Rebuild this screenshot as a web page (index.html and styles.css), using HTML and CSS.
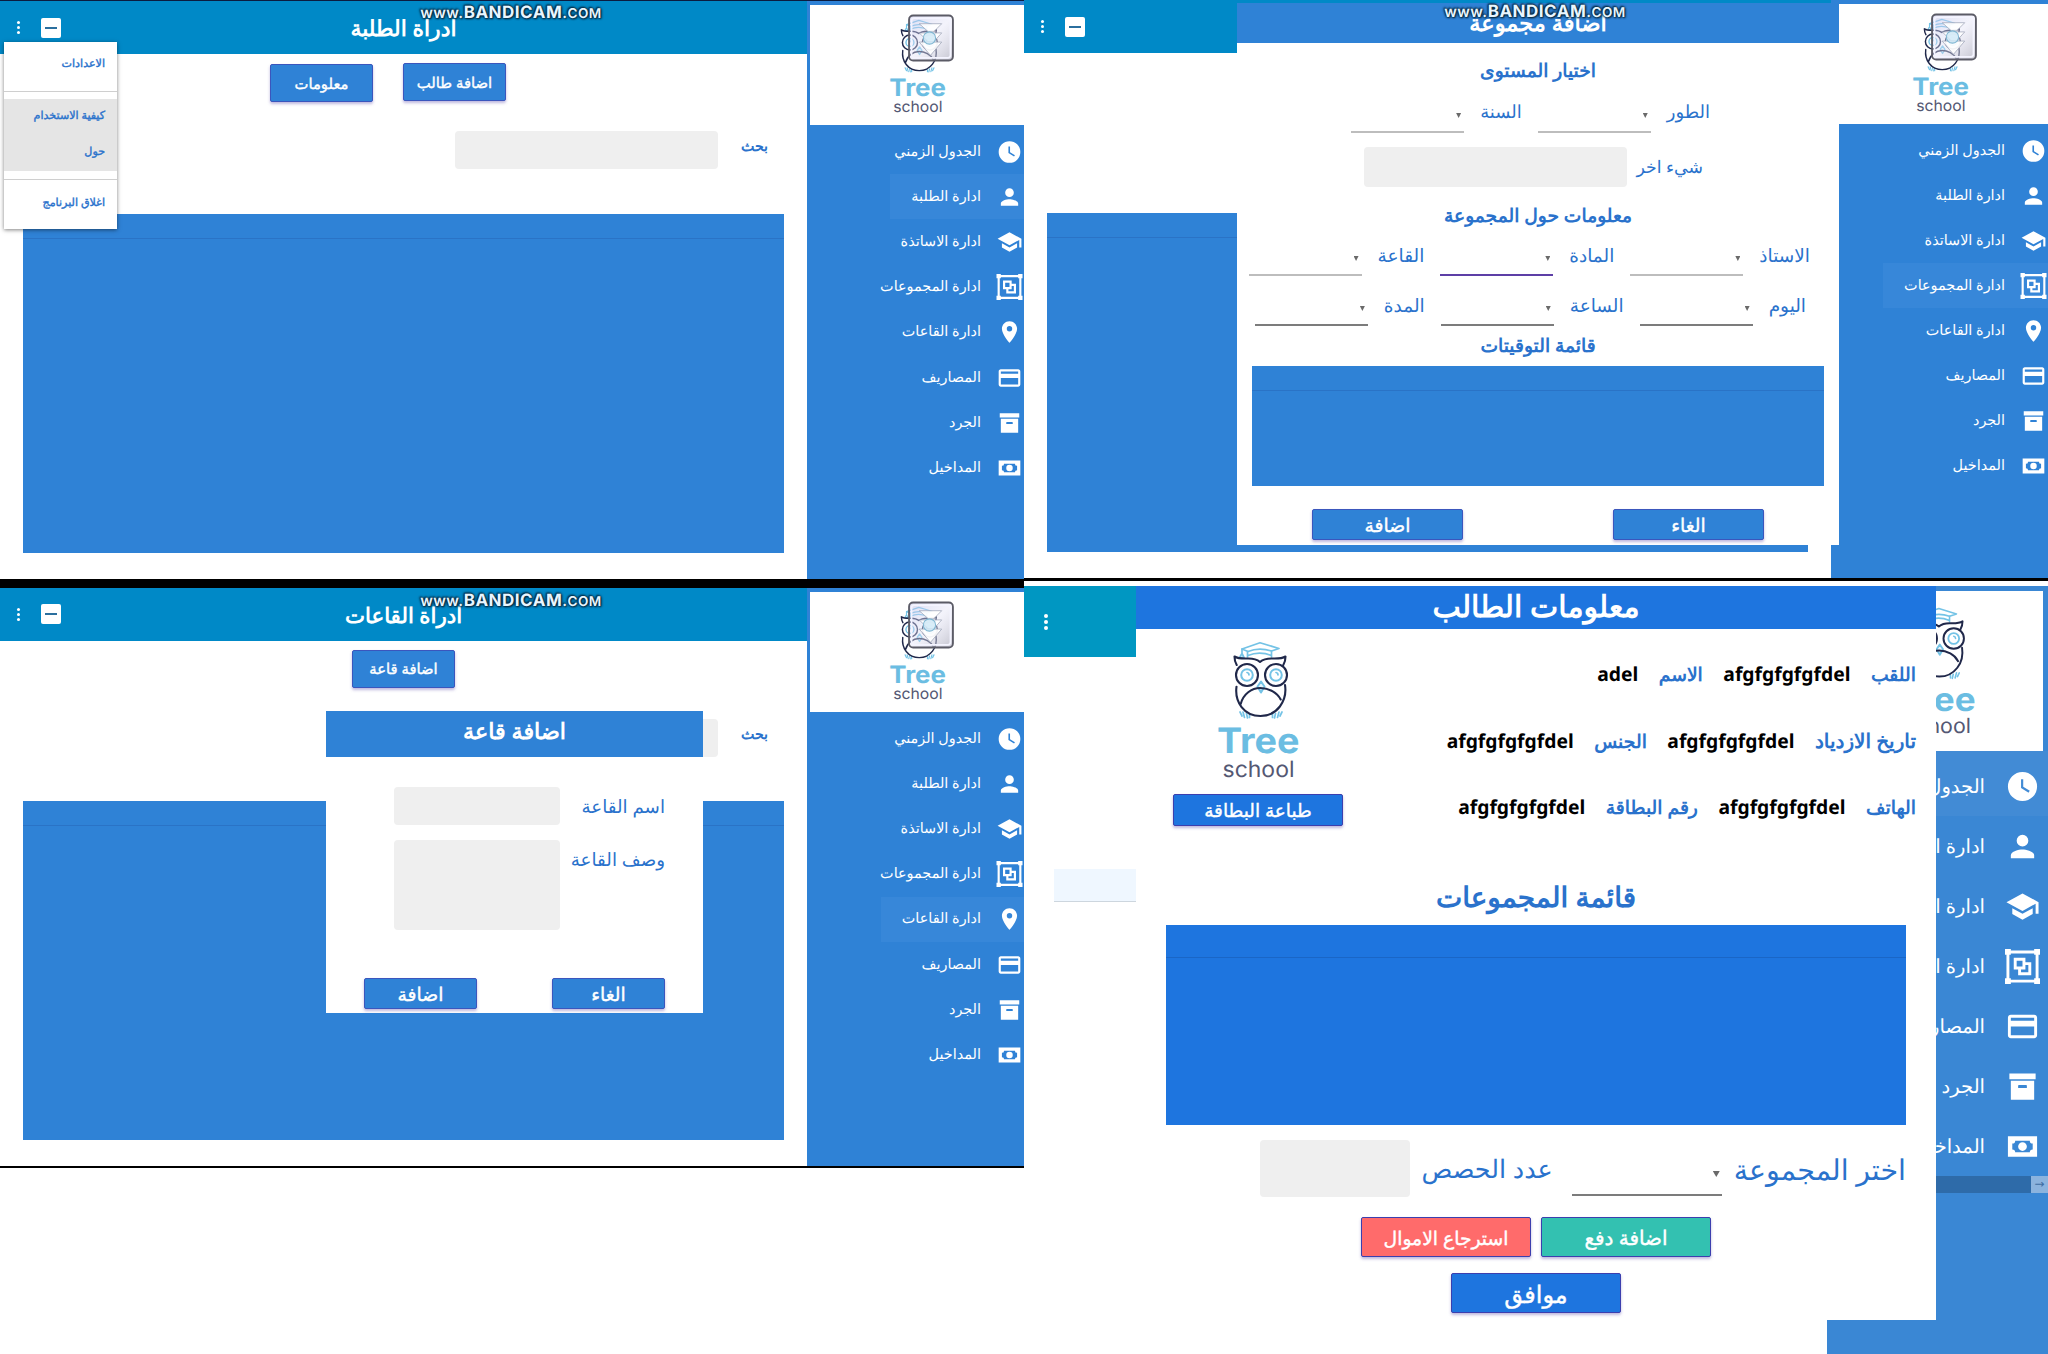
FILE: index.html
```html
<!DOCTYPE html>
<html lang="ar">
<head>
<meta charset="utf-8">
<title>Tree school</title>
<link rel="stylesheet" href="styles.css">
</head>
<body>
<svg class="defs" aria-hidden="true">
  <symbol id="i-clock" viewBox="0 0 24 24"><path fill-rule="evenodd" d="M12 2a10 10 0 1 0 0 20 10 10 0 0 0 0-20zm4.2 14.2L11 13V7h1.5v5.2l4.5 2.7-.8 1.3z"/></symbol>
  <symbol id="i-person" viewBox="0 0 24 24"><path d="M12 12a4 4 0 1 0 0-8 4 4 0 0 0 0 8zm0 2c-2.67 0-8 1.34-8 4v2h16v-2c0-2.66-5.33-4-8-4z"/></symbol>
  <symbol id="i-school" viewBox="0 0 24 24"><path d="M5 13.18v4L12 21l7-3.82v-4L12 17l-7-3.82zM12 3 1 9l11 6 9-4.91V17h2V9L12 3z"/></symbol>
  <symbol id="i-group" viewBox="0 0 24 24"><path fill-rule="evenodd" d="M0 0h4v1h16V0h4v4h-1v16h1v4h-4v-1H4v1H0v-4h1V4H0V0zm4 3v1H3v16h1v1h16v-1h1V4h-1V3H4zm2 3h8v3h4v9H9v-4H6V6zm2 2v4h4V8H8zm6 3v3h-3v2h5v-5h-2z"/></symbol>
  <symbol id="i-pin" viewBox="0 0 24 24"><path d="M12 2C8.13 2 5 5.13 5 9c0 5.25 7 13 7 13s7-7.75 7-13c0-3.87-3.13-7-7-7zm0 9.5a2.5 2.5 0 1 1 0-5 2.5 2.5 0 0 1 0 5z"/></symbol>
  <symbol id="i-card" viewBox="0 0 24 24"><path d="M20 4H4c-1.11 0-1.99.89-1.99 2L2 18c0 1.11.89 2 2 2h16c1.11 0 2-.89 2-2V6c0-1.11-.89-2-2-2zm0 14H4v-6h16v6zm0-10H4V6h16v2z"/></symbol>
  <symbol id="i-box" viewBox="0 0 24 24"><path fill-rule="evenodd" d="M3 3h18v4H3V3zm1 5h16v13H4V8zm5.500 3a.5.5 0 0 0-.5.500V13h6v-1.500a.5.5 0 0 0-.5-.5h-5z"/></symbol>
  <symbol id="i-cash" viewBox="0 0 24 24"><path fill-rule="evenodd" d="M2 5h20v14H2V5zm10 4a3 3 0 1 0 0 6 3 3 0 0 0 0-6zM7 8a2 2 0 0 1-2 2v4a2 2 0 0 1 2 2h10a2 2 0 0 1 2-2v-4a2 2 0 0 1-2-2H7z"/></symbol>
  <symbol id="logo" viewBox="0 0 86 140">
    <g fill="none" stroke-linecap="round" stroke-linejoin="round">
      <g stroke="#74c3e6" stroke-width="1.7">
        <path d="M27 9 45 2.700 64 8.500l-7.500 2.500M27 9l6 2.500c7-3 16-3 23.500-.5"/>
        <path d="M32.500 11.500V17M56.500 11v6M33 15.500c7-3 16-3 23.500 0M27 9v4.500l-2.500 4h4.500l-2-4"/>
        <circle cx="32" cy="35" r="5.800" stroke-width="2"/><circle cx="61" cy="35" r="5.800" stroke-width="2"/>
        <path d="M32 32.500a2.500 2.500 0 0 1 2 2.500M61 32.500a2.500 2.500 0 0 1 2 2.500"/>
        <path d="M46 41.500l3.500 5-3.500 6-3.500-6z" stroke-width="2" fill="#e6f5fc"/>
        <path d="M25 72l2 4M28 72l1.500 5.500M31.500 73.500l1 4.500M34.500 74.500v3M57.500 74.500v3M60.500 73.500l-1 4.500M64 72l-1.500 5.500M67 72l-2 4"/>
      </g>
      <g stroke="#20284a" stroke-width="2.100">
        <path d="M21.700 25c-1.500-2.500-2.200-5-2.200-8.500 4 2.500 9 2 14 2s8 .5 11.500 3.500c3.500-3 6.500-3.500 11.500-3.500s10 .5 14-2c0 3.500-.7 6-2.200 8.500"/>
        <circle cx="32" cy="35" r="11"/><circle cx="61" cy="35" r="11"/>
        <path d="M21.500 46.700C19.500 62 29 76 45.500 76S72.500 61 70 45M25.700 64c2.500-10 11-16 19.500-16s17 4.500 20.500 11.500"/>
      </g>
    </g>
    <text x="2" y="113" textLength="82.500" lengthAdjust="spacingAndGlyphs" font-family="Inter, sans-serif" font-weight="700" font-size="35" fill="#6bbde2">Tree</text>
    <text x="7.500" y="137" textLength="72" lengthAdjust="spacingAndGlyphs" font-family="Inter, sans-serif" font-size="22.500" fill="#545873">school</text>
  </symbol>
  <linearGradient id="plate-fill" x1="0" y1="0" x2="1" y2="1"><stop offset="0" stop-color="#b9bce8" stop-opacity=".5"/><stop offset=".5" stop-color="#e2e2f6" stop-opacity=".4"/><stop offset="1" stop-color="#a9a9b8" stop-opacity=".7"/></linearGradient>
  <symbol id="plate" viewBox="0 0 48 48">
    <rect x="2" y="2" width="43" height="44" rx="4" fill="url(#plate-fill)" stroke="#5b5b66" stroke-width="1.800"/>
    <rect x="4.500" y="4.500" width="38" height="39" rx="2.500" fill="none" stroke="#f4f4ff" stroke-width="1.600"/>
    <g fill="#fff" fill-opacity=".9" stroke="#9aa0b4" stroke-width=".7"><path d="M12 10h22l-8 8h-5z"/><path d="M12 19h22l-8 9h-5z"/><path d="M12 28h22l-11 13z"/></g>
    <circle cx="22" cy="24" r="6" fill="#cfe9f6" fill-opacity=".8" stroke="#7fb6d2"/>
  </symbol>
</svg>

<main class="board">
  <div class="column">
    <section class="win win-students">
      <div class="page">
        <header class="bar"><div class="tools"><i class="dots"></i><i class="mini"></i></div><h1>ادراة الطلبة</h1></header>
        <div class="actions pair"><button class="btn"><span>معلومات</span></button><button class="btn up"><span>اضافة طالب</span></button></div>
        <div class="search"><label>بحث</label><div class="input"></div></div>
        <div class="table"></div>
      </div>
      <aside class="side">
        <div class="brand"><svg class="logo"><use href="#logo"/></svg><svg class="plate"><use href="#plate"/></svg></div>
        <nav>
          <a><svg><use href="#i-clock"/></svg><span>الجدول الزمني</span></a>
          <a class="on"><svg><use href="#i-person"/></svg><span>ادارة الطلبة</span></a>
          <a><svg><use href="#i-school"/></svg><span>ادارة الاساتذة</span></a>
          <a><svg><use href="#i-group"/></svg><span>ادارة المجموعات</span></a>
          <a><svg><use href="#i-pin"/></svg><span>ادارة القاعات</span></a>
          <a><svg><use href="#i-card"/></svg><span>المصاريف</span></a>
          <a><svg><use href="#i-box"/></svg><span>الجرد</span></a>
          <a><svg><use href="#i-cash"/></svg><span>المداخيل</span></a>
        </nav>
      </aside>
      <div class="menu">
        <div class="group first"><span>الاعدادات</span></div>
        <div class="group hover"><span>كيفية الاستخدام</span><span>حول</span></div>
        <div class="group last"><span>اغلاق البرنامج</span></div>
      </div>
      <div class="mark">www.<b>BANDICAM</b>.<small>COM</small></div>
    </section>

    <section class="win win-rooms">
      <div class="page">
        <header class="bar"><div class="tools"><i class="dots"></i><i class="mini"></i></div><h1>ادراة القاعات</h1></header>
        <div class="actions"><button class="btn"><span>اضافة قاعة</span></button></div>
        <div class="search"><label>بحث</label><div class="input"></div></div>
        <div class="table"></div>
      </div>
      <aside class="side">
        <div class="brand"><svg class="logo"><use href="#logo"/></svg><svg class="plate"><use href="#plate"/></svg></div>
        <nav>
          <a><svg><use href="#i-clock"/></svg><span>الجدول الزمني</span></a>
          <a><svg><use href="#i-person"/></svg><span>ادارة الطلبة</span></a>
          <a><svg><use href="#i-school"/></svg><span>ادارة الاساتذة</span></a>
          <a><svg><use href="#i-group"/></svg><span>ادارة المجموعات</span></a>
          <a class="on"><svg><use href="#i-pin"/></svg><span>ادارة القاعات</span></a>
          <a><svg><use href="#i-card"/></svg><span>المصاريف</span></a>
          <a><svg><use href="#i-box"/></svg><span>الجرد</span></a>
          <a><svg><use href="#i-cash"/></svg><span>المداخيل</span></a>
        </nav>
      </aside>
      <div class="dialog room-dialog">
        <h2>اضافة قاعة</h2>
        <div class="line"><label>اسم القاعة</label><div class="input"></div></div>
        <div class="line"><label>وصف القاعة</label><div class="input tall"></div></div>
        <div class="choices"><button class="btn"><span>الغاء</span></button><button class="btn"><span>اضافة</span></button></div>
      </div>
      <div class="mark">www.<b>BANDICAM</b>.<small>COM</small></div>
    </section>
  </div>

  <div class="column">
    <section class="win win-groups">
      <div class="page">
        <header class="bar"><div class="tools"><i class="dots"></i><i class="mini"></i></div></header>
        <div class="table"></div>
      </div>
      <aside class="side">
        <div class="brand"><svg class="logo"><use href="#logo"/></svg><svg class="plate"><use href="#plate"/></svg></div>
        <nav>
          <a><svg><use href="#i-clock"/></svg><span>الجدول الزمني</span></a>
          <a><svg><use href="#i-person"/></svg><span>ادارة الطلبة</span></a>
          <a><svg><use href="#i-school"/></svg><span>ادارة الاساتذة</span></a>
          <a class="on"><svg><use href="#i-group"/></svg><span>ادارة المجموعات</span></a>
          <a><svg><use href="#i-pin"/></svg><span>ادارة القاعات</span></a>
          <a><svg><use href="#i-card"/></svg><span>المصاريف</span></a>
          <a><svg><use href="#i-box"/></svg><span>الجرد</span></a>
          <a><svg><use href="#i-cash"/></svg><span>المداخيل</span></a>
        </nav>
      </aside>
      <div class="dialog group-dialog">
        <h2>اضافة مجموعة</h2>
        <h3 class="h-level">اختيار المستوى</h3>
        <div class="fields level"><label>الطور</label><div class="select pale"></div><label>السنة</label><div class="select pale"></div></div>
        <div class="fields other"><label>شيء اخر</label><div class="input"></div></div>
        <h3 class="h-info">معلومات حول المجموعة</h3>
        <div class="fields who"><label>الاستاذ</label><div class="select pale"></div><label>المادة</label><div class="select focus"></div><label>القاعة</label><div class="select pale"></div></div>
        <div class="fields when"><label>اليوم</label><div class="select"></div><label>الساعة</label><div class="select"></div><label>المدة</label><div class="select"></div></div>
        <h3 class="h-times">قائمة التوقيتات</h3>
        <div class="table"></div>
        <div class="choices"><button class="btn"><span>الغاء</span></button><button class="btn"><span>اضافة</span></button></div>
      </div>
      <div class="mark">www.<b>BANDICAM</b>.<small>COM</small></div>
    </section>

    <section class="win win-info">
      <div class="page">
        <header class="bar"><i class="dots"></i></header>
        <div class="chip"></div>
      </div>
      <aside class="side">
        <div class="brand"><svg class="logo"><use href="#logo"/></svg></div>
        <nav>
          <a class="on"><svg><use href="#i-clock"/></svg><span>الجدول الزمني</span></a>
          <a><svg><use href="#i-person"/></svg><span>ادارة الطلبة</span></a>
          <a><svg><use href="#i-school"/></svg><span>ادارة الاساتذة</span></a>
          <a><svg><use href="#i-group"/></svg><span>ادارة المجموعات</span></a>
          <a><svg><use href="#i-card"/></svg><span>المصاريف</span></a>
          <a><svg><use href="#i-box"/></svg><span>الجرد</span></a>
          <a><svg><use href="#i-cash"/></svg><span>المداخيل</span></a>
        </nav>
        <div class="scroll"><i>→</i></div>
      </aside>
      <div class="dialog info-dialog">
        <h2>معلومات الطالب</h2>
        <div class="info">
          <div class="card"><svg class="logo"><use href="#logo"/></svg><button class="btn"><span>طباعة البطاقة</span></button></div>
          <div class="facts">
            <div class="fact"><label>اللقب</label><b>afgfgfgfgfdel</b><label>الاسم</label><b>adel</b></div>
            <div class="fact"><label class="birth">تاريخ الازدياد</label><b>afgfgfgfgfdel</b><label>الجنس</label><b>afgfgfgfgfdel</b></div>
            <div class="fact"><label>الهاتف</label><b>afgfgfgfgfdel</b><label>رقم البطاقة</label><b>afgfgfgfgfdel</b></div>
          </div>
        </div>
        <h3>قائمة المجموعات</h3>
        <div class="table"></div>
        <div class="pay"><label class="big">اختر المجموعة</label><div class="select"></div><label class="count">عدد الحصص</label><div class="input"></div></div>
        <div class="choices"><button class="btn green"><span>اضافة دفع</span></button><button class="btn red"><span>استرجاع الاموال</span></button></div>
        <div class="choices ok"><button class="btn"><span>موافق</span></button></div>
      </div>
    </section>
  </div>
</main>
</body>
</html>
```
FILE: styles.css
```css
* { box-sizing: border-box; }

body {
  margin: 0;
  background: #fff;
  font-family: "Open Sans", "Noto Sans", sans-serif;
  text-rendering: geometricPrecision;
  color: #2a72cc;
}

h1, h2, h3 { margin: 0; font-weight: 700; text-align: center; direction: rtl; white-space: nowrap; }
label, span { white-space: nowrap; direction: rtl; }
.defs { position: absolute; width: 0; height: 0; }

.board { display: grid; grid-template-columns: 1024px 1024px; height: 1354px; overflow: hidden; }
.column { display: flex; flex-direction: column; }

/* windows */
.win { position: relative; display: flex; overflow: hidden; background: #fff; }
.win-students { height: 588px; border-top: 1px solid #0b1c40; border-bottom: 9px solid #000; }
.win-rooms { height: 580px; border-bottom: 2px solid #000; }
.win-groups { height: 581px; border-bottom: 3px solid #000; }
.win-info { height: 768px; margin-top: 5px; }

.page { width: 807px; flex: none; display: flex; flex-direction: column; }
.bar { height: 53px; display: grid; grid-template-columns: 120px 1fr 120px; align-items: center; background: #0089c7; }
.tools { display: flex; align-items: center; gap: 21px; padding-left: 17px; }
.bar h1 { font-size: 21.900px; line-height: 32px; color: #fff; padding-top: 3px; }

.dots { width: 3px; height: 3px; border-radius: 50%; background: #fff; box-shadow: 0 -5px #fff, 0 5px #fff; }
.mini { width: 20px; height: 20px; border-radius: 2px; background: #fff; display: grid; place-items: center; }
.mini::after { content: ""; width: 12px; height: 2px; background: #2b6f9e; }

.actions { display: flex; justify-content: center; padding-top: 10px; }
.actions.pair { justify-content: flex-start; gap: 30px; padding-left: 270px; }
.btn {
  width: 103px; height: 38px; padding: 0;
  border: 1px solid #3b56bd; border-radius: 2px;
  background: #2f82d6; color: #fff;
  box-shadow: 0 2px 3px rgba(70, 50, 160, .35);
  font: 400 14.800px/20px "Open Sans", "Noto Sans", sans-serif;
  text-rendering: geometricPrecision;
  -webkit-text-stroke: .4px currentColor;
  direction: rtl; white-space: nowrap;
}
.pair .btn { padding-top: 1px; }
.pair .up { position: relative; top: -1px; }

.search { display: flex; direction: rtl; align-items: center; gap: 23px; padding-right: 39px; margin-top: 29px; }
.search label { font-weight: 700; font-size: 14.200px; line-height: 20px; padding-bottom: 6px; }
.input { width: 263px; height: 38px; border-radius: 4px; background: #efefef; }
.table { height: 339px; margin: 45px 23px 0; background: #2f82d6; padding-top: 24px; }
.table::before { content: ""; display: block; height: 1px; background: #2a73c6; }

/* sidebar */
.side { flex: 1; min-width: 0; background: #2f82d6; display: flex; flex-direction: column; }
.brand { position: relative; height: 120px; margin: 4px 0 0 3px; background: #fff; padding: 13px 0 0 78px; }
.logo { display: block; width: 59px; height: 97px; }
.plate { position: absolute; left: 97px; top: 8px; width: 49px; height: 50px; }
nav { display: flex; flex-direction: column; direction: rtl; align-items: flex-start; padding-top: 4px; }
nav a { display: flex; align-items: center; gap: 15px; height: 45.200px; padding: 0 1px 0 21px; color: #fff; font-size: 14.400px; line-height: 20px; }
nav a.on { background: #3787d9; }
nav svg { width: 27px; height: 26px; fill: #fff; flex: none; }

/* drop-down menu */
.menu {
  position: absolute; left: 4px; top: 41px; width: 113px; height: 187px;
  background: #fff; box-shadow: 0 1px 4px rgba(0, 0, 0, .5);
  font-size: 11.100px; -webkit-text-stroke: .4px currentColor; line-height: 36px; direction: rtl;
}
.group { display: flex; flex-direction: column; padding-right: 12px; }
.group.first { height: 50px; padding-top: 4px; border-bottom: 1px solid #cfcfcf; }
.group.hover { height: 72px; margin-top: 7px; background: #e5e5e5; }
.group.hover span { position: relative; top: -1px; }
.group.last { margin-top: 8px; padding-top: 5px; border-top: 1px solid #cfcfcf; }

.mark {
  position: absolute; left: 415px; top: 0; width: 192px; text-align: center;
  font: 600 15px/24px Inter, sans-serif; letter-spacing: .5px; color: #e8f6ff;
  text-shadow: 0 0 2px #06283f, 0 0 3px #06283f, 1px 1px 2px #06283f, -1px -1px 2px #06283f;
}
.mark b { font-size: 17px; font-weight: 700; }
.mark small { font-size: 13.500px; }

/* dialogs */
.dialog { position: absolute; background: #fff; display: flex; flex-direction: column; }
.dialog h2 { color: #fff; background: #2f82d6; }
.choices { display: flex; direction: rtl; }

.room-dialog { left: 326px; top: 123px; width: 377px; height: 302px; }
.room-dialog h2 { height: 46px; font-size: 22.300px; line-height: 39px; margin-bottom: 30px; }
.line { display: flex; direction: rtl; padding-right: 38px; margin-bottom: 15px; }
.line label { width: 105px; font-size: 18.300px; line-height: 39px; height: 38px; }
.line .input { width: 166px; }
.line .tall { height: 90px; }
.room-dialog .choices { gap: 75px; padding: 33px 38px 0 0; }
.room-dialog .btn { width: 113px; height: 31px; font-size: 18.800px; }

.group-dialog { left: 213px; top: 3px; width: 602px; height: 542px; }
.group-dialog h2 { height: 40px; font-size: 22.500px; line-height: 39px; }
.group-dialog h3 { font-size: 18.700px; }
.h-level { line-height: 56px; height: 57px; }
.h-info { line-height: 58px; height: 56px; }
.h-times { line-height: 40px; }
.fields { display: flex; direction: rtl; gap: 16px; height: 33px; }
.fields label { font-size: 18.500px; line-height: 25px; }
.select { width: 113px; border-bottom: 2px solid #7c7c7c; padding: 13px 3px 0 0; }
.select::before { content: ""; display: block; width: 5px; height: 5px; background: #6a6a6a; clip-path: polygon(0 0, 100% 0, 50% 100%); }
.select.pale { border-color: #bdbdbd; }
.select.focus { border-color: #5d3fa6; }
.level { padding-right: 129px; }
.fields.level label { font-size: 18px; }
.other { padding-right: 136px; gap: 9px; height: 40px; margin-top: 14px; }
.fields.other label { font-size: 17.300px; line-height: 42px; }
.other .input { height: 40px; }
.who { padding-right: 29px; }
.when { padding-right: 33px; margin-top: 17px; }
.group-dialog .table { height: 120px; margin: 0 15px; }
.group-dialog .choices { gap: 150px; padding: 23px 75px 0 0; }
.group-dialog .btn { width: 151px; height: 31px; font-size: 18.800px; }

/* window tweaks */
.win-rooms .tools { padding-bottom: 1px; }
.win-rooms h1 { font-size: 21.300px; padding-top: 3px; }
.win-rooms .actions { padding-top: 9px; }
.win-rooms .search { margin-top: 31px; }
.win-rooms .search label { padding-bottom: 7px; }
.win-rooms .table { margin-top: 44px; }
.win-rooms .mark { top: 1px; }
.win-groups .table { margin-top: 160px; }
.win-groups .brand { margin: 4px 0 0 8px; padding-left: 72px; }
.win-groups .plate { left: 91px; }
.win-groups .group-dialog .table { margin-top: 0; }
.win-groups nav a { height: 45px; }

/* student card */
.win-info .page { width: 803px; }
.win-info .bar { height: 71px; background: #0097c2; padding-left: 20px; }
.win-info .dots { width: 4px; height: 4px; box-shadow: 0 -6px #fff, 0 6px #fff; }
.chip { width: 120px; height: 33px; margin: 212px 0 0 30px; background: #eff7ff; border-bottom: 1px solid #cdd6de; }
.win-info .side { background: #3a87d4; }
.win-info .brand { height: 160px; margin: 5px 5px 0 0; padding: 15px 0 0 70px; }
.win-info .side .logo { width: 80px; height: 130px; }
.win-info nav { padding-top: 0; }
.win-info nav a { height: 60px; padding-right: 8px; gap: 20px; font-size: 19.500px; line-height: 26px; }
.win-info nav a.on { background: #428bd5; height: 65px; padding-top: 5px; }
.win-info nav svg { width: 35px; height: 35px; }
.scroll { height: 17px; background: #2e6ba9; display: flex; justify-content: flex-end; }
.scroll i { width: 17px; background: #8bb3de; color: #3f6fa3; font: 12px/16px "DejaVu Sans", sans-serif; text-align: center; }

.info-dialog { left: 112px; top: 0; width: 800px; height: 734px; }
.info-dialog h2 { height: 43px; line-height: 40px; font-size: 30px; background: #1e75df; }
.info-dialog h3 { font-size: 27.900px; line-height: 48px; height: 52px; }
.info { display: flex; height: 244px; }
.card { width: 244px; padding-top: 11px; display: flex; flex-direction: column; align-items: center; gap: 14px; }
.card .logo { width: 86px; height: 140px; }
.info-dialog .btn { background: #1e75df; width: 170px; height: 32px; font-size: 18.500px; border-color: #3c3fae; }
.card .btn { padding-top: 2px; }
.facts { flex: 1; padding: 12px 20px 0 0; }
.fact { display: flex; direction: rtl; gap: 20.500px; height: 66.500px; align-items: center; font-size: 18.800px; font-weight: 700; }
.fact .birth { font-size: 20px; }
.fact b { color: #000; direction: ltr; font: 700 19.300px/28px "Noto Sans", sans-serif; }
.info-dialog .table { height: 200px; margin: 0 30px; padding-top: 32px; background: #1e75df; }
.info-dialog .table::before { background: #1a66c6; }
.pay { display: flex; direction: rtl; margin-top: 15px; padding-right: 30px; height: 57px; }
.pay .big { font-size: 28.500px; line-height: 60px; margin-left: 12px; }
.pay .count { font-size: 25.500px; line-height: 59px; margin: 0 19px 0 12px; }
.pay .select { width: 150px; height: 56px; padding: 31px 2px 0 0; }
.pay .select::before { width: 7px; height: 6px; }
.pay .input { width: 150px; height: 57px; }
.info-dialog .choices { justify-content: center; gap: 10px; margin-top: 20px; }
.info-dialog .choices.ok { margin-top: 16px; }
.info-dialog .choices .btn { height: 40px; }
.info-dialog .btn.green { background: #33c1b1; font-size: 20px; padding-top: 2px; }
.info-dialog .btn.red { background: #ff6b6b; font-size: 18.800px; padding-top: 2px; }
.info-dialog .ok .btn { font-size: 24px; padding-top: 4px; }
```
